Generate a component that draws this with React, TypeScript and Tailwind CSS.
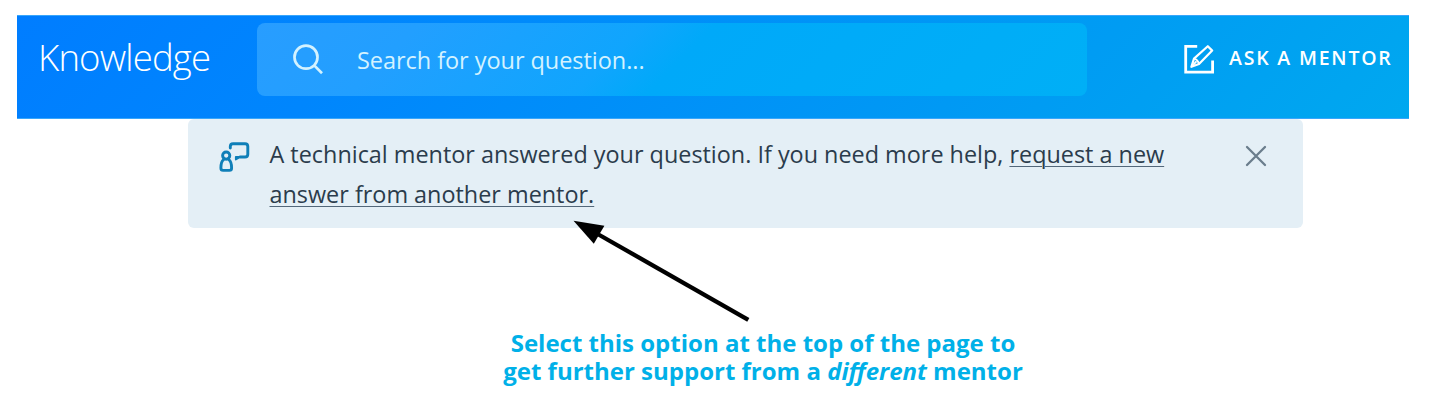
function SearchIcon() {
  return (
    <svg className="ml-[36px] h-[31px] w-[31px] shrink-0" viewBox="0 0 31 31" fill="none" stroke="#d3f2ff" strokeWidth="2.7">
      <circle cx="13" cy="13.2" r="11.5" />
      <path d="M21.2 21.4 29 29.2" />
    </svg>
  );
}

function EditIcon() {
  return (
    <svg className="h-[32px] w-[32px] shrink-0" viewBox="0 0 32 32" fill="none" stroke="white" strokeWidth="2.2" strokeLinejoin="round">
      <path d="M14.2 4.4H2.7V30.2H29.6V18.6" strokeWidth="2.8" strokeLinejoin="miter" />
      <path d="M8.4 24.8 11 16.6 24.8 4.2 29.2 8.6 16 22Z" />
      <path d="M11 16.6Q14.8 17.6 16 22M8.6 24.6 13.4 19.4" strokeWidth="1.9" />
    </svg>
  );
}

function MentorIcon() {
  return (
    <svg className="h-[31px] w-[31px] shrink-0" viewBox="0 0 31 31" fill="none" stroke="#0f7fb8" strokeWidth="2.9" strokeLinecap="round" strokeLinejoin="round">
      <circle cx="7.2" cy="13.6" r="3.6" />
      <path d="M4.6 17.6C2.4 19.2 1.9 22.4 1.9 26Q1.9 28.4 4.1 28.4H10.4Q12.6 28.4 12.6 26C12.6 22.4 12 19.2 9.8 17.6" />
      <path d="M11.3 6V4.5Q11.3 1.7 14.1 1.7H26Q28.8 1.7 28.8 4.5V12.2Q28.8 15 26 15H21.2" />
      <path d="M16.8 14.8V17.6L21.2 15Z" fill="#0f7fb8" strokeWidth="1.8" />
    </svg>
  );
}

export default function App() {
  return (
    <div className="relative h-[408px] w-[1433px] overflow-hidden bg-white pt-[15px] font-['Open_Sans','Noto_Sans',sans-serif]">
      <header className="ml-[17px] flex h-[104px] w-[1392px] items-start border-y border-[#38a6fb] bg-[linear-gradient(135deg,#007dff_0%,#0086fd_25%,#0099f4_68%,#00a8ef_100%)] bg-origin-border">
        <div className="mt-[16px] ml-[21px] w-[219px] text-[36.5px] leading-[50px] font-light tracking-[-0.82px] whitespace-nowrap text-white">
          Knowledge
        </div>
        <div className="mt-[7px] flex h-[73px] w-[830px] items-center rounded-[8px] bg-[linear-gradient(135deg,#289dff_0%,#229fff_18%,#10a5fd_43%,#00a9f9_51%,#00aff6_100%)]">
          <SearchIcon />
          <span className="ml-[33px] pt-px text-[23.5px] leading-[34px] tracking-[-0.05px] whitespace-nowrap text-[#d3f2ff]">
            Search for your question...
          </span>
        </div>
        <button className="mt-[26px] ml-[96px] flex h-[32px] items-center gap-[14px] text-white">
          <EditIcon />
          <span className="text-[19.5px] leading-[32px] font-[650] tracking-[1.8px] whitespace-nowrap">ASK A MENTOR</span>
        </button>
      </header>

      <section className="ml-[188px] flex h-[109px] w-[1115px] items-start rounded-[6px] bg-[#e4eff6] pl-[31px]">
        <div className="pt-[23px]">
          <MentorIcon />
        </div>
        <p className="ml-[19.5px] w-[967.5px] pt-[15px] text-[23.4px] leading-[40px] whitespace-nowrap text-[#2b3c4c]">
          A technical mentor answered your question. If you need more help,{" "}
          <a className="underline decoration-[#52677a] decoration-1 underline-offset-[3px]">
            request a new
            <br />
            answer from another mentor.
          </a>
        </p>
        <button aria-label="Close" className="mt-[26px] ml-[8px]">
          <svg className="h-[22px] w-[22px]" viewBox="0 0 22 22" fill="none" stroke="#6a7d8c" strokeWidth="2.3" strokeLinecap="round">
            <path d="M2 2 20 20M20 2 2 20" />
          </svg>
        </button>
      </section>

      <p className="mt-[101px] ml-[463px] w-[600px] text-center text-[24px] leading-[28px] font-bold whitespace-nowrap text-[#00b0e8]">
        Select this option at the top of the page to
        <br />
        get further support from a <em>different</em> mentor
      </p>

      <svg className="absolute top-[214px] left-[566px] h-[110px] w-[190px]" viewBox="566 214 190 110">
        <path d="M598.5 234.5 748.3 319.8" stroke="#000" strokeWidth="4.3" />
        <path d="M573.5 220.7 604.4 225.7 593.8 243.8Z" fill="#000" />
      </svg>
    </div>
  );
}
